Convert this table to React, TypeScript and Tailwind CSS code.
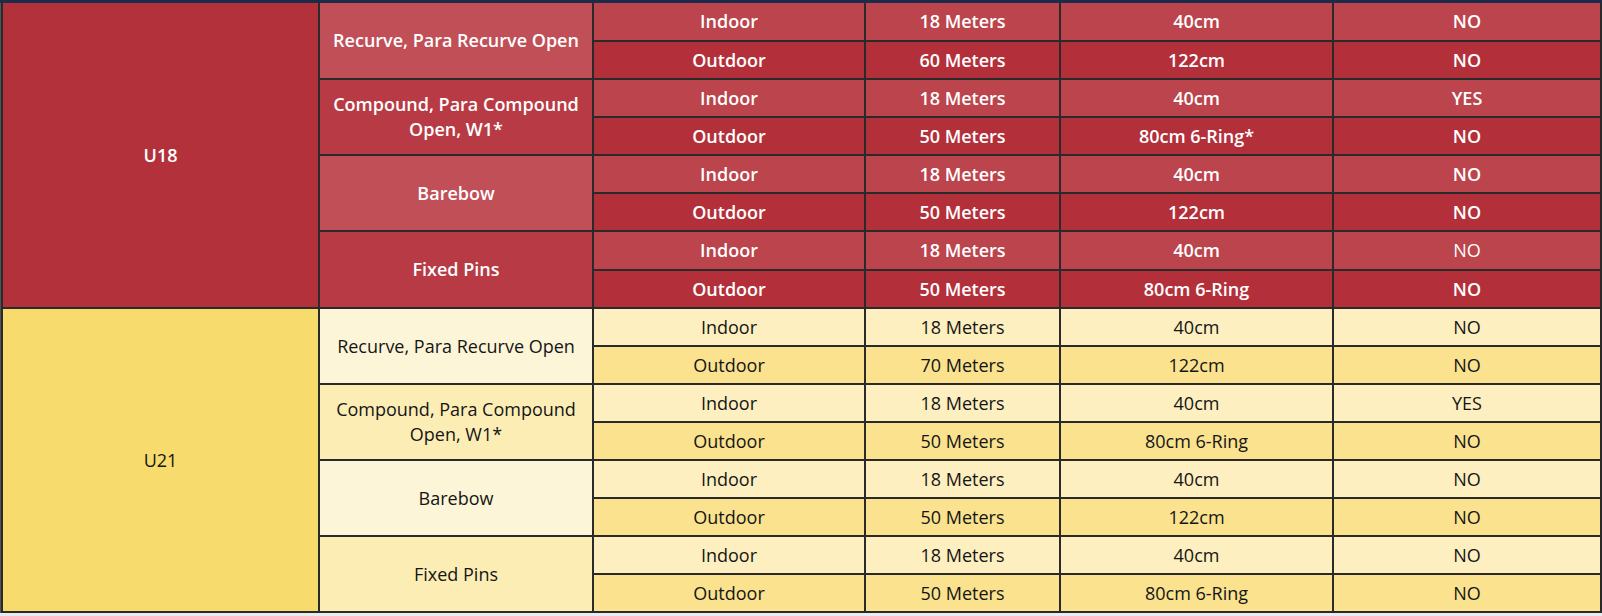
import React from "react";

type Row = { env: string; dist: string; face: string; yn: string; thin?: boolean };
type Cat = { name: string; light: boolean; rows: Row[] };
type Group = { age: string; red: boolean; cats: Cat[] };

const groups: Group[] = [
  {
    age: "U18",
    red: true,
    cats: [
      {
        name: "Recurve, Para Recurve Open",
        light: true,
        rows: [
          { env: "Indoor", dist: "18 Meters", face: "40cm", yn: "NO" },
          { env: "Outdoor", dist: "60 Meters", face: "122cm", yn: "NO" },
        ],
      },
      {
        name: "Compound, Para Compound Open, W1*",
        light: false,
        rows: [
          { env: "Indoor", dist: "18 Meters", face: "40cm", yn: "YES" },
          { env: "Outdoor", dist: "50 Meters", face: "80cm 6-Ring*", yn: "NO" },
        ],
      },
      {
        name: "Barebow",
        light: true,
        rows: [
          { env: "Indoor", dist: "18 Meters", face: "40cm", yn: "NO" },
          { env: "Outdoor", dist: "50 Meters", face: "122cm", yn: "NO" },
        ],
      },
      {
        name: "Fixed Pins",
        light: false,
        rows: [
          { env: "Indoor", dist: "18 Meters", face: "40cm", yn: "NO", thin: true },
          { env: "Outdoor", dist: "50 Meters", face: "80cm 6-Ring", yn: "NO" },
        ],
      },
    ],
  },
  {
    age: "U21",
    red: false,
    cats: [
      {
        name: "Recurve, Para Recurve Open",
        light: true,
        rows: [
          { env: "Indoor", dist: "18 Meters", face: "40cm", yn: "NO" },
          { env: "Outdoor", dist: "70 Meters", face: "122cm", yn: "NO" },
        ],
      },
      {
        name: "Compound, Para Compound Open, W1*",
        light: false,
        rows: [
          { env: "Indoor", dist: "18 Meters", face: "40cm", yn: "YES" },
          { env: "Outdoor", dist: "50 Meters", face: "80cm 6-Ring", yn: "NO" },
        ],
      },
      {
        name: "Barebow",
        light: true,
        rows: [
          { env: "Indoor", dist: "18 Meters", face: "40cm", yn: "NO" },
          { env: "Outdoor", dist: "50 Meters", face: "122cm", yn: "NO" },
        ],
      },
      {
        name: "Fixed Pins",
        light: false,
        rows: [
          { env: "Indoor", dist: "18 Meters", face: "40cm", yn: "NO" },
          { env: "Outdoor", dist: "50 Meters", face: "80cm 6-Ring", yn: "NO" },
        ],
      },
    ],
  },
];

const cell = "flex items-center justify-center text-center";

export default function App() {
  return (
    <div
      className="w-[1602px] h-[616px] bg-[#e8ecf1] overflow-hidden"
      style={{ fontFamily: '"Open Sans", "Noto Sans", sans-serif' }}
    >
      <div className="h-[3px] bg-[#1e2a4c]" />
      <div className="border-l border-[#505358]">
        <div className="bg-[#2a2a2a] pl-[2px] pr-[2px] pb-[2px] grid grid-cols-[315px_272px_270px_193px_271px_266px] grid-rows-[37px_repeat(5,36px)_37px_repeat(9,36px)] gap-[2px] text-[18px]">
          {groups.map((g) => {
            const txt = g.red ? "text-white font-semibold" : "text-[#151515] font-normal";
            const ageBg = g.red ? "bg-[#b3313b]" : "bg-[#f7dc6d]";
            return (
              <React.Fragment key={g.age}>
                <div className={`${cell} ${ageBg} ${txt} row-span-8`}>{g.age}</div>
                {g.cats.map((c, ci) => {
                  const catBg = g.red
                    ? c.light
                      ? "bg-[#c14f57]"
                      : "bg-[#b83a44]"
                    : c.light
                    ? "bg-[#fdf5d8]"
                    : "bg-[#fcedb5]";
                  return (
                    <React.Fragment key={ci}>
                      <div className={`${cell} ${catBg} ${txt} row-span-2 px-2 leading-[25px]`}>{c.name}</div>
                      {c.rows.map((r, ri) => {
                        const rowBg = g.red
                          ? ri === 0
                            ? "bg-[#bc444c]"
                            : "bg-[#b3303a]"
                          : ri === 0
                          ? "bg-[#fdefbf]"
                          : "bg-[#fae28e]";
                        return (
                          <React.Fragment key={ri}>
                            <div className={`${cell} ${rowBg} ${txt}`}>{r.env}</div>
                            <div className={`${cell} ${rowBg} ${txt}`}>{r.dist}</div>
                            <div className={`${cell} ${rowBg} ${txt}`}>{r.face}</div>
                            <div className={`${cell} ${rowBg} ${txt} ${r.thin ? "!font-normal" : ""}`}>{r.yn}</div>
                          </React.Fragment>
                        );
                      })}
                    </React.Fragment>
                  );
                })}
              </React.Fragment>
            );
          })}
        </div>
      </div>
    </div>
  );
}
